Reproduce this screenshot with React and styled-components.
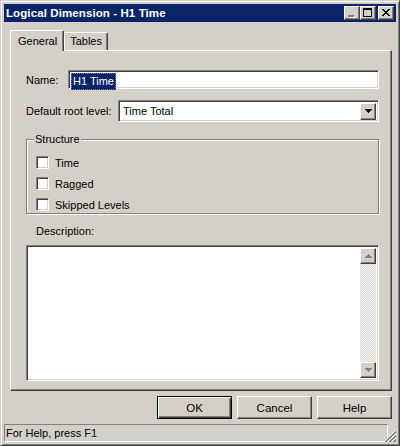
import React from "react";
import styled, { createGlobalStyle } from "styled-components";

const face = "#d4d0c8";
const shadow = "#808080";
const dark = "#404040";
const navy = "#0a246a";

const GlobalStyle = createGlobalStyle`
  html, body { margin: 0; padding: 0; background: ${face}; }
  body {
    font-family: "Liberation Sans", Arial, sans-serif;
    font-size: 11px;
    color: #000;
  }
  * { box-sizing: border-box; }
`;

const raised = `
  border: 1px solid;
  border-color: #fff ${dark} ${dark} #fff;
  box-shadow: inset -1px -1px ${shadow};
`;

const sunken = `
  border: 1px solid;
  border-color: ${shadow} #fff #fff ${shadow};
  box-shadow: inset 1px 1px ${dark}, inset -1px -1px ${face};
`;

const Window = styled.div`
  width: 400px;
  height: 446px;
  display: flex;
  flex-direction: column;
  background: ${face};
  border: 1px solid;
  border-color: ${face} ${dark} ${dark} ${face};
  box-shadow: inset 1px 1px #fff, inset -1px -1px ${shadow};
  padding: 3px;
`;

const TitleBar = styled.div`
  height: 18px;
  flex: none;
  display: flex;
  align-items: center;
  justify-content: space-between;
  background: ${navy};
  padding: 0 2px;
`;

const Title = styled.span`
  color: #fff;
  font-weight: bold;
  font-size: 11.5px;
  letter-spacing: 0.1px;
`;

const CaptionButtons = styled.div`
  display: flex;
  align-items: center;
`;

const CaptionButton = styled.div`
  width: 16px;
  height: 14px;
  background: ${face};
  ${raised}
  margin-left: ${(p) => (p.$gap ? "2px" : "0")};
  display: flex;
  svg { display: block; }
`;

const Body = styled.div`
  flex: 1;
  display: flex;
  flex-direction: column;
  padding: 8px 4px 5px 6px;
`;

const TabStrip = styled.div`
  height: 21px;
  display: flex;
  align-items: flex-end;
  margin-bottom: -1px;
  position: relative;
  z-index: 1;
`;

const Tab = styled.div`
  height: ${(p) => (p.$active ? "21px" : "18px")};
  margin-bottom: ${(p) => (p.$active ? "0" : "1px")};
  padding: ${(p) => (p.$active ? "3px 6px 0 7px" : "1px 5px 0 5px")};
  background: ${face};
  border-top: 1px solid #fff;
  border-left: 1px solid #fff;
  border-right: 1px solid ${dark};
  box-shadow: inset -1px 0 ${shadow};
  border-radius: 2px 2px 0 0;
  line-height: 14px;
`;

const Panel = styled.div`
  flex: 1;
  display: flex;
  flex-direction: column;
  border: 1px solid;
  border-color: #fff ${dark} ${dark} #fff;
  box-shadow: inset -1px -1px ${shadow};
  padding: 19px 12px 9px 15px;
`;

const FieldRow = styled.div`
  display: flex;
  align-items: center;
  height: ${(p) => p.$h}px;
  margin-top: ${(p) => p.$mt || 0}px;
`;

const Label = styled.label`
  width: ${(p) => p.$w}px;
  flex: none;
`;

const TextInput = styled.div`
  flex: 1;
  height: 100%;
  background: #fff;
  ${sunken}
  padding: 2px 0 0 2px;
  display: flex;
  align-items: flex-start;
`;

const Selected = styled.span`
  background: ${navy};
  color: #fff;
  padding: 1px;
  line-height: 13px;
  border: 1px dotted #7d86a8;
`;

const Combo = styled.div`
  flex: 1;
  height: 100%;
  background: #fff;
  ${sunken}
  padding: 2px;
  display: flex;
  align-items: center;
  justify-content: space-between;
`;

const ComboText = styled.span`
  padding-left: 2px;
`;

const ArrowButton = styled.div`
  width: 16px;
  height: ${(p) => p.$h || 17}px;
  background: ${face};
  ${raised}
  display: flex;
  align-items: center;
  justify-content: center;
  flex: none;
`;

const Group = styled.div`
  position: relative;
  margin-top: 17px;
  padding: 16px 0 2px 9px;
  border: 1px solid ${shadow};
  box-shadow: inset 1px 1px #fff, 1px 1px #fff;
`;

const Legend = styled.span`
  position: absolute;
  top: -7px;
  left: 7px;
  padding: 0 1px;
  line-height: 13px;
  background: ${face};
`;

const Checks = styled.div`
  display: flex;
  flex-direction: column;
  gap: 8px;
`;

const CheckRow = styled.div`
  display: flex;
  align-items: center;
  height: 13px;
`;

const CheckBox = styled.span`
  width: 13px;
  height: 13px;
  background: #fff;
  ${sunken}
  margin-right: 6px;
  flex: none;
`;

const DescLabel = styled.div`
  margin: 11px 0 0 10px;
  line-height: 13px;
`;

const DescBox = styled.div`
  flex: 1;
  margin-top: 7px;
  display: flex;
  background: #fff;
  ${sunken}
  padding: 2px;
`;

const DescArea = styled.div`
  flex: 1;
`;

const ScrollBar = styled.div`
  width: 16px;
  display: flex;
  flex-direction: column;
`;

const Track = styled.div`
  flex: 1;
  background: repeating-conic-gradient(${face} 0 25%, #fff 0 50%) 0 0 / 2px 2px;
`;

const ButtonRow = styled.div`
  display: flex;
  justify-content: flex-end;
  gap: 5px;
  margin-top: 5px;
`;

const Button = styled.button`
  width: 75px;
  height: 23px;
  font: inherit;
  font-size: 11.5px;
  color: #000;
  background: ${face};
  padding: 0;
  border: 1px solid;
  border-color: ${(p) => (p.$default ? "#000" : `#fff ${dark} ${dark} #fff`)};
  box-shadow: ${(p) =>
    p.$default
      ? `inset 1px 1px #fff, inset -1px -1px ${dark}, inset -2px -2px ${shadow}`
      : `inset -1px -1px ${shadow}`};
`;

const StatusBar = styled.div`
  height: 18px;
  flex: none;
  display: flex;
  align-items: stretch;
`;

const StatusText = styled.div`
  flex: 1;
  border: 1px solid;
  border-color: ${shadow} #fff #fff ${shadow};
  padding: 2px 0 0 1px;
  line-height: 13px;
`;

const Grip = styled.div`
  width: 8px;
  display: flex;
  align-items: flex-end;
  justify-content: flex-end;
  svg { display: block; }
`;

function MinGlyph() {
  return (
    <svg width="14" height="12" shapeRendering="crispEdges">
      <rect x="4" y="9" width="6" height="2" fill="#fff" />
      <rect x="3" y="8" width="6" height="2" fill={shadow} />
    </svg>
  );
}

function MaxGlyph() {
  return (
    <svg width="14" height="12" shapeRendering="crispEdges">
      <rect x="2" y="1" width="9" height="2" fill="#000" />
      <rect x="2" y="1" width="1" height="9" fill="#000" />
      <rect x="10" y="1" width="1" height="9" fill="#000" />
      <rect x="2" y="9" width="9" height="1" fill="#000" />
    </svg>
  );
}

function CloseGlyph() {
  return (
    <svg width="14" height="12" shapeRendering="crispEdges">
      {[0, 1, 2, 3, 4, 5, 6].map((i) => (
        <g key={i} fill="#000">
          <rect x={3 + i} y={2 + i} width="2" height="1" />
          <rect x={9 - i} y={2 + i} width="2" height="1" />
        </g>
      ))}
    </svg>
  );
}

function Triangle({ up, color = "#000" }) {
  return (
    <svg width="7" height="4" shapeRendering="crispEdges">
      {[0, 1, 2, 3].map((i) => (
        <rect
          key={i}
          x={up ? 3 - i : i}
          y={i}
          width={up ? 1 + i * 2 : 7 - i * 2}
          height="1"
          fill={color}
        />
      ))}
    </svg>
  );
}

function GripGlyph() {
  return (
    <svg width="12" height="12" shapeRendering="crispEdges" style={{ marginLeft: -4 }}>
      {[0, 4, 8].map((o) => (
        <g key={o}>
          {Array.from({ length: 12 - o }).map((_, i) => (
            <g key={i}>
              <rect x={o + i} y={11 - i} width="1" height="1" fill="#fff" />
              <rect x={o + i + 1} y={11 - i} width="1" height="1" fill={shadow} />
              <rect x={o + i + 2} y={11 - i} width="1" height="1" fill={shadow} />
            </g>
          ))}
        </g>
      ))}
    </svg>
  );
}

function Check({ label }) {
  return (
    <CheckRow>
      <CheckBox />
      <span>{label}</span>
    </CheckRow>
  );
}

export default function App() {
  return (
    <>
      <GlobalStyle />
      <Window>
        <TitleBar>
          <Title>Logical Dimension - H1 Time</Title>
          <CaptionButtons>
            <CaptionButton><MinGlyph /></CaptionButton>
            <CaptionButton><MaxGlyph /></CaptionButton>
            <CaptionButton $gap><CloseGlyph /></CaptionButton>
          </CaptionButtons>
        </TitleBar>
        <Body>
          <TabStrip>
            <Tab $active>General</Tab>
            <Tab>Tables</Tab>
          </TabStrip>
          <Panel>
            <FieldRow $h={19}>
              <Label $w={42}>Name:</Label>
              <TextInput>
                <Selected>H1 Time</Selected>
              </TextInput>
            </FieldRow>
            <FieldRow $h={22} $mt={11}>
              <Label $w={92}>Default root level:</Label>
              <Combo>
                <ComboText>Time Total</ComboText>
                <ArrowButton>
                  <Triangle />
                </ArrowButton>
              </Combo>
            </FieldRow>
            <Group>
              <Legend>Structure</Legend>
              <Checks>
                <Check label="Time" />
                <Check label="Ragged" />
                <Check label="Skipped Levels" />
              </Checks>
            </Group>
            <DescLabel>Description:</DescLabel>
            <DescBox>
              <DescArea />
              <ScrollBar>
                <ArrowButton $h={16}>
                  <Triangle up color={shadow} />
                </ArrowButton>
                <Track />
                <ArrowButton $h={16}>
                  <Triangle color={shadow} />
                </ArrowButton>
              </ScrollBar>
            </DescBox>
          </Panel>
          <ButtonRow>
            <Button $default>OK</Button>
            <Button>Cancel</Button>
            <Button>Help</Button>
          </ButtonRow>
        </Body>
        <StatusBar>
          <StatusText>For Help, press F1</StatusText>
          <Grip>
            <GripGlyph />
          </Grip>
        </StatusBar>
      </Window>
    </>
  );
}
